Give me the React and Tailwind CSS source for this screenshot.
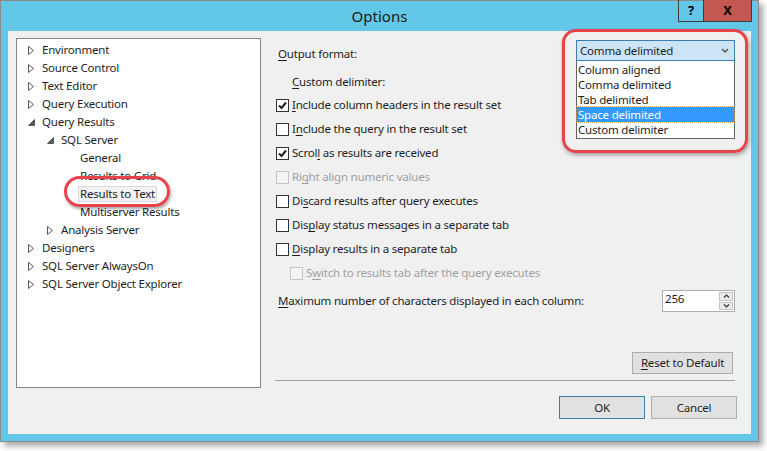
import React from "react";

const font = { fontFamily: '"Noto Sans", "Open Sans", sans-serif' };

const Collapsed = () => (
  <svg width="6" height="9" viewBox="0 0 6 9" className="block">
    <path d="M0.5 0.5 L5.5 4.5 L0.5 8.5 Z" fill="white" stroke="#595959" strokeWidth="1" />
  </svg>
);

const Expanded = () => (
  <svg width="7" height="7" viewBox="0 0 7 7" className="block">
    <path d="M6.5 0.5 L6.5 6.5 L0.5 6.5 Z" fill="#595959" stroke="#595959" strokeWidth="1" />
  </svg>
);

const treeItems = [
  { label: "Environment", level: 0, arrow: "c" },
  { label: "Source Control", level: 0, arrow: "c" },
  { label: "Text Editor", level: 0, arrow: "c" },
  { label: "Query Execution", level: 0, arrow: "c" },
  { label: "Query Results", level: 0, arrow: "e" },
  { label: "SQL Server", level: 1, arrow: "e" },
  { label: "General", level: 2 },
  { label: "Results to Grid", level: 2 },
  { label: "Results to Text", level: 2, selected: true },
  { label: "Multiserver Results", level: 2 },
  { label: "Analysis Server", level: 1, arrow: "c" },
  { label: "Designers", level: 0, arrow: "c" },
  { label: "SQL Server AlwaysOn", level: 0, arrow: "c" },
  { label: "SQL Server Object Explorer", level: 0, arrow: "c" },
];

const indents = ["pl-[11px]", "pl-[30px]", "pl-[49px]"];

const TreeRow = ({ item }) => (
  <div className={`h-[18px] flex items-center ${indents[item.level]}`}>
    <div className="w-[14px] flex items-center">
      {item.arrow === "c" && <Collapsed />}
      {item.arrow === "e" && <Expanded />}
    </div>
    <span
      className={
        item.selected
          ? "relative -ml-[2px] px-[1px] h-[16px] leading-[14px] bg-[#f2f2f2] border border-[#d9d9d9]"
          : "leading-[16px]"
      }
    >
      {item.label}
      {item.selected && (
        <span className="absolute -left-[15px] -top-[11px] w-[106px] h-[31px] rounded-full border-[3px] border-[#e8434b] shadow-[1px_2px_3px_rgba(0,0,0,0.35)]" />
      )}
    </span>
  </div>
);

const Check = ({ checked, disabled }) => (
  <div
    className={`w-[13px] h-[13px] border flex items-center justify-center ${
      disabled ? "border-[#c6c6c6] bg-[#f4f4f4]" : "border-[#333333] bg-white"
    }`}
  >
    {checked && (
      <svg width="9" height="9" viewBox="0 0 9 9">
        <path d="M1 4.5 L3.5 7 L8 1.5" fill="none" stroke="#222" strokeWidth="2" />
      </svg>
    )}
  </div>
);

const U = ({ children }) => <span className="underline underline-offset-2">{children}</span>;

const CheckRow = ({ checked, disabled, indent, children }) => (
  <div className={`h-[24px] flex items-center gap-[3px] ${indent ? "pl-[15px]" : "pl-px"}`}>
    <Check checked={checked} disabled={disabled} />
    <span className={disabled ? "text-[#a0a0a0]" : "text-[#1e1e1e]"}>{children}</span>
  </div>
);

const Button = ({ children, primary, className }) => (
  <div
    className={`flex items-center justify-center bg-[#e1e1e1] border ${
      primary ? "border-[#3c7fb1]" : "border-[#adadad]"
    } ${className}`}
  >
    {children}
  </div>
);

const options = ["Column aligned", "Comma delimited", "Tab delimited", "Space delimited", "Custom delimiter"];

export default function App() {
  return (
    <div className="w-[767px] h-[451px] bg-white text-[11.5px] tracking-[-0.2px] text-[#1e1e1e]" style={font}>
      <div className="w-[759px] h-[442px] flex flex-col border border-[#8a8a8a] bg-[#63c8e8] shadow-[4px_4px_6px_rgba(0,0,0,0.35)]">
        <div className="h-[30px] relative flex items-center justify-center">
          <span className="text-[15px] tracking-normal text-[#1a1a1a]">Options</span>
          <div className="absolute right-[6px] -top-px flex">
            <div className="w-[26px] h-[22px] border border-t-0 border-[#3d3d3d] flex items-center justify-center font-bold text-[13px] text-black">
              ?
            </div>
            <div className="w-[48px] h-[22px] border border-t-0 border-l-0 border-[#3d3d3d] bg-[#c4574f] flex items-center justify-center font-bold text-[13px] text-black">
              X
            </div>
          </div>
        </div>
        <div className="mx-[7px] mb-[7px] flex-1 bg-[#f0f0f0] flex relative">
          <div className="ml-[8px] mt-[7px] w-[245px] h-[350px] bg-white border border-[#828790] pt-[2px] text-[#1e1e1e]">
            {treeItems.map((item) => (
              <TreeRow key={item.label} item={item} />
            ))}
          </div>

          <div className="ml-[14px] w-[460px] flex flex-col pt-[9px]">
            <div className="flex justify-between items-start">
              <span className="pl-[3px] pt-[6px] leading-[16px]">
                <U>O</U>utput format:
              </span>
              <div className="relative">
                <div className="w-[159px] h-[21px] bg-[#cce4f7] border border-[#3c7fb1] flex items-center justify-between pl-[3px] pr-[5px]">
                  <span>Comma delimited</span>
                  <svg width="8" height="6" viewBox="0 0 8 6">
                    <path d="M1 1 L4 4 L7 1" fill="none" stroke="#555" strokeWidth="1.5" />
                  </svg>
                </div>
                <div className="absolute top-full left-0 w-[159px] bg-white border border-[#646464] border-t-0 py-px z-10">
                  {options.map((o) => (
                    <div
                      key={o}
                      className={`h-[15px] leading-[15px] pl-[1px] overflow-hidden ${
                        o === "Space delimited" ? "bg-[#3399ff] text-white outline-1 outline-dotted outline-[#e0a050]" : ""
                      }`}
                    >
                      {o}
                    </div>
                  ))}
                </div>
              </div>
            </div>
            <div className="mt-[12px] h-[16px] leading-[16px] pl-[17px]">
              <U>C</U>ustom delimiter:
            </div>
            <div className="mt-[3px] flex flex-col">
              <CheckRow checked>
                <U>I</U>nclude column headers in the result set
              </CheckRow>
              <CheckRow>
                I<U>n</U>clude the query in the result set
              </CheckRow>
              <CheckRow checked>
                Scrol<U>l</U> as results are received
              </CheckRow>
              <CheckRow disabled>
                Ri<U>g</U>ht align numeric values
              </CheckRow>
              <CheckRow>
                Di<U>s</U>card results after query executes
              </CheckRow>
              <CheckRow>
                Dis<U>p</U>lay status messages in a separate tab
              </CheckRow>
              <CheckRow>
                <U>D</U>isplay results in a separate tab
              </CheckRow>
              <CheckRow disabled indent>
                S<U>w</U>itch to results tab after the query executes
              </CheckRow>
            </div>
            <div className="mt-[4px] h-[24px] flex items-center justify-between pl-[3px]">
              <span>
                <U>M</U>aximum number of characters displayed in each column:
              </span>
              <div className="w-[73px] h-[22px] bg-white border border-[#abadb3] flex">
                <span className="flex-1 pl-[2px] leading-[16px]">256</span>
                <div className="w-[16px] flex flex-col p-px gap-px">
                  <div className="flex-1 bg-[#eaeaea] border border-[#c4c4c4] flex items-center justify-center">
                    <svg width="7" height="4" viewBox="0 0 7 4">
                      <path d="M1 3.5 L3.5 1 L6 3.5" fill="none" stroke="#333" strokeWidth="1.2" />
                    </svg>
                  </div>
                  <div className="flex-1 bg-[#eaeaea] border border-[#c4c4c4] flex items-center justify-center">
                    <svg width="7" height="4" viewBox="0 0 7 4">
                      <path d="M1 0.5 L3.5 3 L6 0.5" fill="none" stroke="#333" strokeWidth="1.2" />
                    </svg>
                  </div>
                </div>
              </div>
            </div>
            <div className="mt-[39px] flex justify-end pr-[2px]">
              <Button className="w-[101px] h-[22px]">
                <U>R</U>eset to Default
              </Button>
            </div>
            <div className="mt-[6px] h-px bg-[#a0a0a0]" />
            <div className="mt-[15px] flex justify-end gap-[6px] -mr-[2px]">
              <Button primary className="w-[86px] h-[23px]">
                OK
              </Button>
              <Button className="w-[86px] h-[23px]">Cancel</Button>
            </div>
          </div>

          <div className="absolute left-[554px] -top-[2px] w-[186px] h-[124px] rounded-[14px] border-[3px] border-[#e8434b] shadow-[1px_2px_4px_rgba(0,0,0,0.35)] pointer-events-none z-20" />
        </div>
      </div>
    </div>
  );
}
